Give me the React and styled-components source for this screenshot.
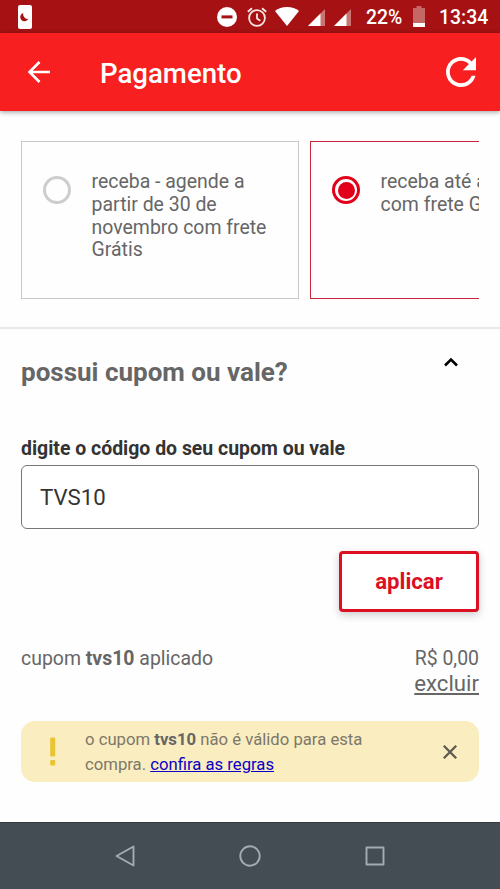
import { useState } from "react";
import styled, { createGlobalStyle } from "styled-components";

const GlobalStyle = createGlobalStyle`
  * {
    box-sizing: border-box;
    margin: 0;
    padding: 0;
  }

  body {
    background-color: #fefefe;
    font-family: Roboto, "Liberation Sans", sans-serif;
    color: #666;
  }

  button, input {
    font-family: inherit;
    background: none;
    border: none;
  }

  svg {
    display: block;
    flex-shrink: 0;
  }
`;

const Screen = styled.div`
  width: 500px;
  height: 889px;
  display: flex;
  flex-direction: column;
  overflow: hidden;
`;

const StatusBar = styled.div`
  height: 33px;
  flex-shrink: 0;
  padding: 0 11px 0 18px;
  display: flex;
  align-items: center;
  justify-content: space-between;
  background-color: #a61214;
`;

const StatusIcons = styled.div`
  display: flex;
  align-items: center;
  color: #fff;
`;

const StatusText = styled.span`
  width: ${({ $width }) => $width}px;
  margin-left: ${({ $gap }) => $gap}px;
  font-size: 19.4px;
  font-weight: 500;
  line-height: 22px;
  white-space: nowrap;
  padding-top: 2px;
`;

const Spaced = styled.span`
  margin-left: ${({ $gap }) => $gap}px;
  padding-top: ${({ $top }) => $top || 0}px;
`;

const Header = styled.header`
  height: 78px;
  flex-shrink: 0;
  padding: 0 24px 0 27px;
  display: flex;
  align-items: center;
  background-color: #f71f20;
  box-shadow: 0 1px 5px rgba(0, 0, 0, 0.4);

  h1 {
    flex: 1;
    margin-left: 49px;
    padding-top: 3px;
    font-size: 27.6px;
    line-height: 32px;
    font-weight: 500;
    color: #fff;
  }
`;

const IconButton = styled.button`
  display: flex;
  cursor: pointer;
`;

const Options = styled.section`
  height: 218px;
  flex-shrink: 0;
  padding: 30px 21px 0;
  border-bottom: 2px solid #e8e8e8;
`;

const OptionList = styled.div`
  display: flex;
  gap: 11px;
  overflow: hidden;
`;

const Option = styled.label`
  width: 278px;
  height: 158px;
  flex-shrink: 0;
  display: flex;
  gap: 20.6px;
  padding: 29px 18px 0 21px;
  border: 1.4px solid ${({ $active }) => ($active ? "#c8283c" : "#c8c8c8")};
  font-size: 19.45px;
  line-height: 22.8px;
  cursor: pointer;
`;

const Radio = styled.span`
  width: 28px;
  height: 28px;
  margin-top: 5px;
  flex-shrink: 0;
  display: flex;
  align-items: center;
  justify-content: center;
  border: ${({ $active }) => ($active ? "3px solid #e2001a" : "3px solid #cdcdcd")};
  border-radius: 50%;

  &::after {
    content: "";
    width: 17px;
    height: 17px;
    border-radius: 50%;
    background-color: ${({ $active }) => ($active ? "#e2001a" : "transparent")};
  }
`;

const Coupon = styled.section`
  flex: 1;
  padding: 0 21px;
  display: flex;
  flex-direction: column;
`;

const CouponHeader = styled.div`
  display: flex;
  justify-content: space-between;
  padding: 28px 21px 0 0;

  h2 {
    font-size: 26px;
    line-height: 30px;
    font-weight: 700;
  }
`;

const FieldLabel = styled.label`
  margin-top: 50px;
  font-size: 19.45px;
  line-height: 23px;
  font-weight: 700;
  color: #333;
`;

const Field = styled.input`
  height: 64px;
  margin-top: 5px;
  padding: 0 18px;
  border: 1.4px solid #777;
  border-radius: 6px;
  background-color: #fff;
  font-size: 22.2px;
  color: #333;
  outline: none;
`;

const ApplyButton = styled.button`
  width: 140px;
  height: 61px;
  margin-top: 22px;
  padding-bottom: 1px;
  align-self: flex-end;
  border: 3px solid #dc0f23;
  border-radius: 4px;
  background-color: #fff;
  box-shadow: 0 3px 8px rgba(0, 0, 0, 0.2);
  font-size: 22.2px;
  font-weight: 700;
  color: #dc0f23;
  cursor: pointer;
`;

const Summary = styled.div`
  display: flex;
  justify-content: space-between;
  margin-top: 35px;
  font-size: 19.45px;
  line-height: 23px;
`;

const Price = styled.div`
  display: flex;
  flex-direction: column;
  align-items: flex-end;

  a {
    font-size: 22.2px;
    line-height: 26px;
    text-decoration: underline;
    cursor: pointer;
  }
`;

const Alert = styled.div`
  height: 61px;
  margin-top: 25px;
  padding: 0 21px 0 28px;
  display: flex;
  align-items: center;
  border-radius: 14px;
  background-color: #faedc0;

  p {
    flex: 1;
    margin-left: 28px;
    font-size: 16.7px;
    line-height: 25px;
    color: #7d786a;
  }

  strong {
    color: #666;
  }

  a {
    color: #0a00c8;
    text-decoration: underline;
  }
`;

const NavBar = styled.nav`
  height: 67px;
  flex-shrink: 0;
  padding: 0 63px;
  display: flex;
  align-items: center;
  justify-content: space-around;
  border-top: 1px solid #353b40;
  background-color: #454d54;
`;

const SaverIcon = () => (
  <svg width="14" height="24" viewBox="0 0 14 24">
    <rect width="14" height="24" rx="2" fill="#fff" />
    <path d="M5.3 7.9a4.3 4.3 0 1 0 5 6.2 5 5 0 0 1-5-6.2z" fill="#a61214" />
  </svg>
);

const DndIcon = () => (
  <svg width="20" height="20" viewBox="0 0 20 20">
    <circle cx="10" cy="10" r="10" fill="#fff" />
    <rect x="4.5" y="8.4" width="11" height="3" fill="#a61214" />
  </svg>
);

const AlarmIcon = () => (
  <svg width="20" height="20" viewBox="0 0 20 20" fill="none" stroke="#fbe6e4" strokeWidth="1.8">
    <circle cx="10" cy="11" r="7.9" />
    <path d="M10 6.5v5l3.3 2.3M.8 4.8 5 1.2M19.2 4.8 15 1.2" />
  </svg>
);

const WifiIcon = () => (
  <svg width="24" height="19" viewBox="0 0 24 19">
    <path d="M12 19 0 4C3.200 1.500 7.200 0 12 0s8.800 1.500 12 4z" fill="#fff" />
  </svg>
);

const SignalIcon = () => (
  <svg width="17" height="17" viewBox="0 0 17 17">
    <path d="M17 0v17H0z" fill="#cc7472" />
    <path d="M12.500 4.500V17H0z" fill="#fff" />
  </svg>
);

const BatteryIcon = () => (
  <svg width="12" height="21" viewBox="0 0 12 21">
    <path d="M3.500 0h5v2H12v19H0V2h3.500z" fill="#c46765" />
    <path d="M0 17h12v4H0z" fill="#fff" />
  </svg>
);

const BackIcon = () => (
  <svg width="24" height="22" viewBox="0 0 24 22" fill="none" stroke="#fff" strokeWidth="2.6">
    <path d="M23 11H3M12.500 1 2.500 11l10 10" />
  </svg>
);

const ReloadIcon = () => (
  <svg width="30" height="30" viewBox="4 4 16 16">
    <path
      d="M17.650 6.350C16.200 4.900 14.210 4 12 4c-4.420 0-7.990 3.580-7.990 8s3.570 8 7.990 8c3.730 0 6.840-2.550 7.730-6h-2.080c-.820 2.330-3.040 4-5.650 4-3.310 0-6-2.690-6-6s2.690-6 6-6c1.660 0 3.140.690 4.220 1.780L13 11h7V4l-2.350 2.350z"
      fill="#fff"
    />
  </svg>
);

const ChevronIcon = () => (
  <svg width="14" height="10" viewBox="0 0 14 10" fill="none" stroke="#000" strokeWidth="2.600">
    <path d="M1 8.500 7 2.500l6 6" />
  </svg>
);

const WarningIcon = () => (
  <svg width="8" height="30" viewBox="0 0 8 30" fill="#e9c434">
    <rect x="1.200" y="0.500" width="5" height="19" rx="1" />
    <rect x="1.200" y="23" width="5" height="5.500" rx="1" />
  </svg>
);

const CloseIcon = () => (
  <svg width="16" height="16" viewBox="0 0 16 16" stroke="#5c594e" strokeWidth="2.300">
    <path d="M1.800 1.800l12.400 12.400M14.200 1.800 1.800 14.200" />
  </svg>
);

const NavIcon = ({ children }) => (
  <svg width="24" height="24" viewBox="0 0 24 24" fill="none" stroke="#a4abb1" strokeWidth="1.900" strokeLinejoin="round">
    {children}
  </svg>
);

const App = () => {
  const [selected, setSelected] = useState(1);
  const [code, setCode] = useState("TVS10");

  const options = [
    "receba - agende a partir de 30 de novembro com frete Grátis",
    <>receba até a<br />com frete Grátis</>,
  ];

  return (
    <Screen>
      <GlobalStyle />

      <StatusBar>
        <SaverIcon />
        <StatusIcons>
          <DndIcon />
          <Spaced $gap={10}><AlarmIcon /></Spaced>
          <Spaced $gap={8}><WifiIcon /></Spaced>
          <Spaced $gap={9} $top={2}><SignalIcon /></Spaced>
          <Spaced $gap={9} $top={2}><SignalIcon /></Spaced>
          <StatusText $gap={15} $width={37}>22%</StatusText>
          <Spaced $gap={10}><BatteryIcon /></Spaced>
          <StatusText $gap={14} $width={50}>13:34</StatusText>
        </StatusIcons>
      </StatusBar>

      <Header>
        <IconButton aria-label="voltar"><BackIcon /></IconButton>
        <h1>Pagamento</h1>
        <IconButton aria-label="recarregar"><ReloadIcon /></IconButton>
      </Header>

      <Options>
        <OptionList>
          {options.map((text, i) => (
            <Option key={i} $active={selected === i} onClick={() => setSelected(i)}>
              <Radio $active={selected === i} />
              <span>{text}</span>
            </Option>
          ))}
        </OptionList>
      </Options>

      <Coupon>
        <CouponHeader>
          <h2>possui cupom ou vale?</h2>
          <ChevronIcon />
        </CouponHeader>

        <FieldLabel htmlFor="code">digite o código do seu cupom ou vale</FieldLabel>
        <Field id="code" value={code} onChange={(e) => setCode(e.target.value)} autoComplete="off" />
        <ApplyButton>aplicar</ApplyButton>

        <Summary>
          <p>cupom <strong>tvs10</strong> aplicado</p>
          <Price>
            <span>R$ 0,00</span>
            <a>excluir</a>
          </Price>
        </Summary>

        <Alert>
          <WarningIcon />
          <p>
            o cupom <strong>tvs10</strong> não é válido para esta<br />
            compra. <a>confira as regras</a>
          </p>
          <IconButton aria-label="fechar"><CloseIcon /></IconButton>
        </Alert>
      </Coupon>

      <NavBar>
        <NavIcon><path d="M20.500 2.500v19L3.500 12z" /></NavIcon>
        <NavIcon><circle cx="12" cy="12" r="9.700" /></NavIcon>
        <NavIcon><rect x="3.500" y="3.500" width="17" height="17" /></NavIcon>
      </NavBar>
    </Screen>
  );
};

export default App;
